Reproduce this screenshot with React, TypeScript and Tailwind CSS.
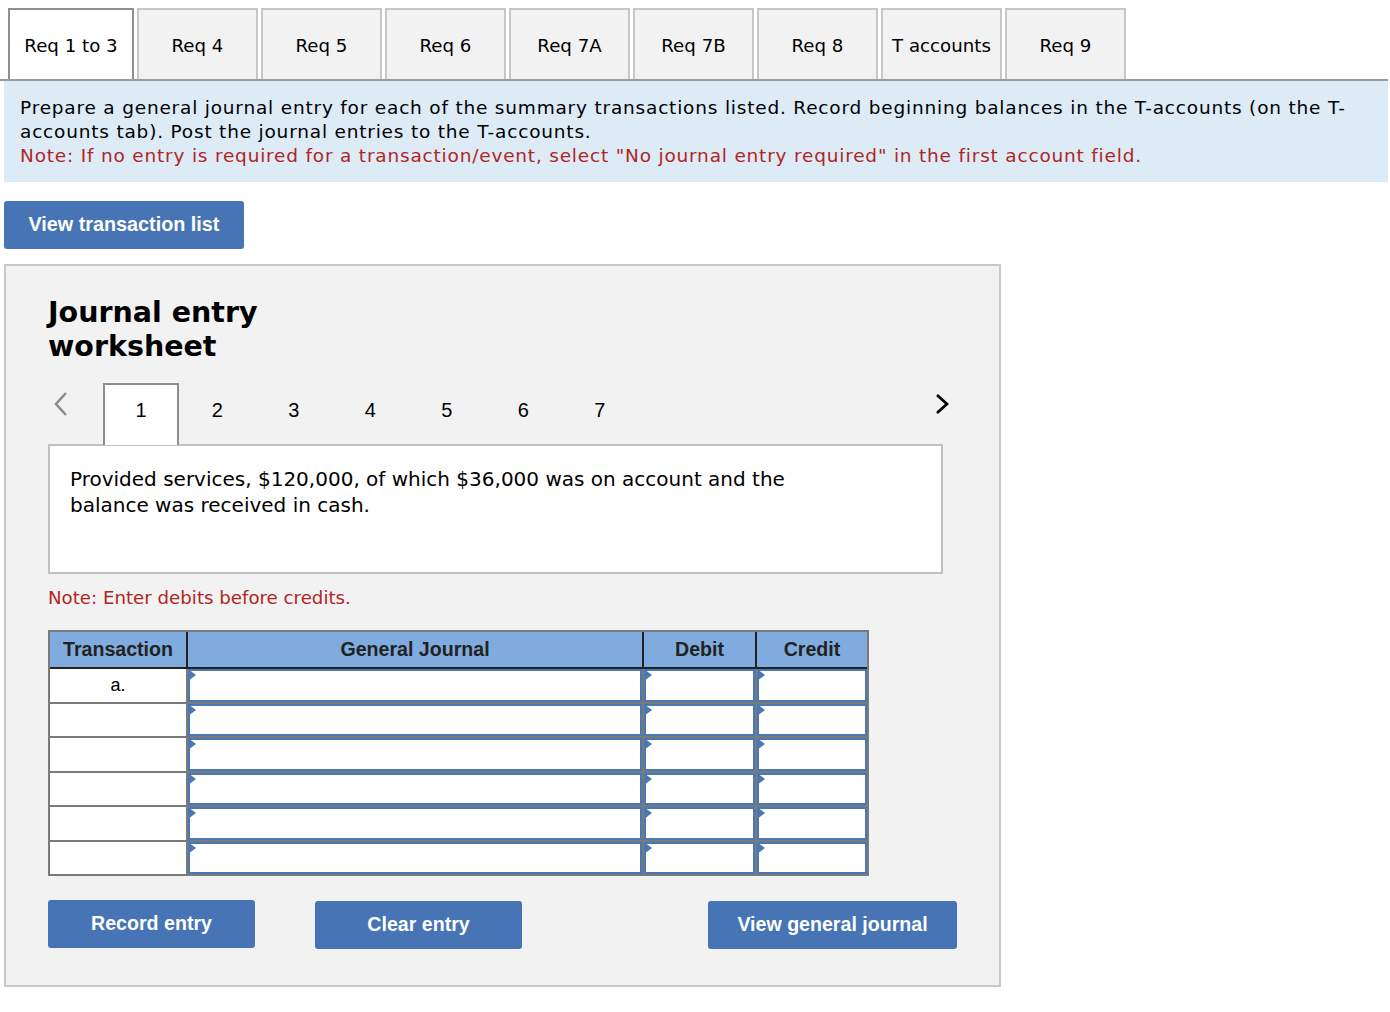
import React from "react";

const tabs = ["Req 1 to 3", "Req 4", "Req 5", "Req 6", "Req 7A", "Req 7B", "Req 8", "T accounts", "Req 9"];

function InputCell() {
  return (
    <div className="relative bg-white border-2 border-[#4a77b5] h-full">
      <svg className="absolute -left-[2px] -top-[2px]" width="8" height="12" viewBox="0 0 8 12">
        <polygon points="0,0 8,6 0,12" fill="#4a77b5" />
      </svg>
    </div>
  );
}

export default function App() {
  const rows = ["a.", "", "", "", "", ""];
  return (
    <div className="w-[1390px] min-h-[1012px] bg-white text-black" style={{ fontFamily: '"DejaVu Sans", Verdana, sans-serif' }}>
      <div className="w-[1388px]">
        {/* Tab bar */}
        <div className="flex gap-[3px] pl-[8px] pt-[8px] border-b-2 border-[#9b9b9b]">
          {tabs.map((t, i) => (
            <div
              key={t}
              className={
                i === 0
                  ? "w-[126px] h-[71px] flex items-center justify-center bg-white border-2 border-b-0 border-[#8e8e8e] text-[18.2px] pt-[3px]"
                  : "w-[121px] h-[71px] flex items-center justify-center bg-[#f2f2f2] border-2 border-b-0 border-[#c6c6c6] text-[18.2px] pt-[3px]"
              }
            >
              {t}
            </div>
          ))}
        </div>
        {/* Info box */}
        <div className="ml-[4px] bg-[#ddebf7] pl-[16px] pr-[20px] pt-[15px] pb-[14px] text-[18.5px] leading-[24px] tracking-[0.8px]">
          <div>
            Prepare a general journal entry for each of the summary transactions listed. Record beginning balances in the T-accounts (on the T-accounts tab). Post the journal entries to the T-accounts.
          </div>
          <div className="text-[#b0261f]">
            Note: If no entry is required for a transaction/event, select "No journal entry required" in the first account field.
          </div>
        </div>
      </div>

      <div className="ml-[4px] mt-[19px] w-[240px] h-[48px] rounded-[3px] bg-[#4674b5] text-white font-bold text-[19.8px] flex items-center justify-center" style={{ fontFamily: '"Liberation Sans", Arial, sans-serif' }}>
        View transaction list
      </div>

      {/* Panel */}
      <div className="ml-[4px] mt-[15px] w-[997px] h-[723px] bg-[#f2f2f2] border-2 border-[#c8c8c8] pl-[42px] pt-[30px]">
        <div className="text-[28.5px] font-bold leading-[34px] w-[270px]">
          Journal entry worksheet
        </div>

        {/* pagination */}
        <div className="mt-[19px] flex items-end w-[895px] h-[62px]" style={{ fontFamily: '"Liberation Sans", Arial, sans-serif' }}>
          <div className="w-[55px] h-full flex items-start pt-[8px] pl-[5px]">
            <svg width="16" height="26" viewBox="0 0 16 26">
              <polyline points="13,2 3,13 13,24" fill="none" stroke="#8a8a8a" strokeWidth="2.5" />
            </svg>
          </div>
          {[1, 2, 3, 4, 5, 6, 7].map((n) =>
            n === 1 ? (
              <div key={n} className="w-[76px] h-[62px] bg-white border-2 border-b-0 border-[#8e8e8e] flex items-start justify-center pt-[10px] text-[20px] relative z-10">
                {n}
              </div>
            ) : (
              <div key={n} className="w-[76.5px] h-[62px] flex items-start justify-center pt-[12px] text-[20px]">
                {n}
              </div>
            )
          )}
          <div className="flex-1 h-full flex items-start justify-end pt-[10px]">
            <svg width="14" height="22" viewBox="0 0 14 22" className="mr-[-6px]">
              <polyline points="2,2 12,11 2,20" fill="none" stroke="#000" strokeWidth="2.8" />
            </svg>
          </div>
        </div>

        {/* content box */}
        <div className="-mt-[1px] w-[895px] h-[130px] bg-white border-2 border-[#c0c0c0] pl-[20px] pt-[20px] text-[20px] leading-[26px]">
          <div className="w-[760px]">
            Provided services, $120,000, of which $36,000 was on account and the balance was received in cash.
          </div>
        </div>

        <div className="mt-[12px] text-[#b0261f] text-[18.2px] leading-[24px]">
          Note: Enter debits before credits.
        </div>

        {/* table */}
        <div className="mt-[20px] w-[821px] border-2 border-[#7a7a7a] bg-[#7a7a7a]" style={{ fontFamily: '"Liberation Sans", Arial, sans-serif' }}>
          <div className="grid grid-cols-[136px_454px_111px_110px] bg-[#222] gap-x-[2px] border-b-2 border-[#222]">
            {["Transaction", "General Journal", "Debit", "Credit"].map((h) => (
              <div key={h} className="h-[35px] bg-[#80abdf] flex items-center justify-center font-bold text-[19.6px] text-[#222]">
                {h}
              </div>
            ))}
          </div>
          <div className="grid grid-cols-[136px_454px_111px_110px] gap-[2px]">
            {rows.map((r, i) => (
              <React.Fragment key={i}>
                <div className="h-[32.5px] bg-white flex items-center justify-center text-[18px]">{r}</div>
                <InputCell />
                <InputCell />
                <InputCell />
              </React.Fragment>
            ))}
          </div>
        </div>

        {/* buttons */}
        <div className="mt-[24px] flex items-start font-bold text-[19.6px] text-white" style={{ fontFamily: '"Liberation Sans", Arial, sans-serif' }}>
          <div className="w-[207px] h-[48px] rounded-[3px] bg-[#4674b5] flex items-center justify-center">Record entry</div>
          <div className="ml-[60px] mt-[1px] w-[207px] h-[48px] rounded-[3px] bg-[#4674b5] flex items-center justify-center">Clear entry</div>
          <div className="ml-[186px] mt-[1px] w-[249px] h-[48px] rounded-[3px] bg-[#4674b5] flex items-center justify-center">View general journal</div>
        </div>
      </div>
    </div>
  );
}
